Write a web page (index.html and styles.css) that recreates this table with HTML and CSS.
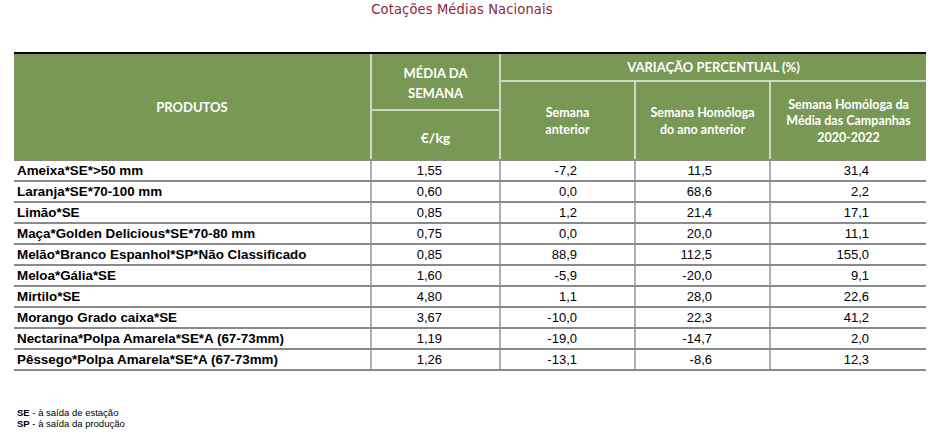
FILE: index.html
```html
<!DOCTYPE html>
<html lang="pt">
<head>
<meta charset="utf-8">
<title>Cotações Médias Nacionais</title>
<link rel="stylesheet" href="styles.css">
</head>
<body>
<h1 class="title">Cotações Médias Nacionais</h1>
<div class="quotes">
  <div class="head">
    <div class="hc h-prod">PRODUTOS</div>
    <div class="hc h-media">MÉDIA DA<br>SEMANA</div>
    <div class="hc h-unit">€/kg</div>
    <div class="hc h-var">VARIAÇÃO PERCENTUAL (%)</div>
    <div class="hc sub s1">Semana<br>anterior</div>
    <div class="hc sub s2">Semana Homóloga<br>do ano anterior</div>
    <div class="hc sub s3">Semana Homóloga da<br>Média das Campanhas<br>2020-2022</div>
  </div>
  <div class="row"><div class="c prod">Ameixa*SE*&gt;50 mm</div><div class="c num">1,55</div><div class="c num">-7,2</div><div class="c num">11,5</div><div class="c num last">31,4</div></div>
  <div class="row"><div class="c prod">Laranja*SE*70-100 mm</div><div class="c num">0,60</div><div class="c num">0,0</div><div class="c num">68,6</div><div class="c num last">2,2</div></div>
  <div class="row"><div class="c prod">Limão*SE</div><div class="c num">0,85</div><div class="c num">1,2</div><div class="c num">21,4</div><div class="c num last">17,1</div></div>
  <div class="row"><div class="c prod">Maça*Golden Delicious*SE*70-80 mm</div><div class="c num">0,75</div><div class="c num">0,0</div><div class="c num">20,0</div><div class="c num last">11,1</div></div>
  <div class="row"><div class="c prod">Melão*Branco Espanhol*SP*Não Classificado</div><div class="c num">0,85</div><div class="c num">88,9</div><div class="c num">112,5</div><div class="c num last">155,0</div></div>
  <div class="row"><div class="c prod">Meloa*Gália*SE</div><div class="c num">1,60</div><div class="c num">-5,9</div><div class="c num">-20,0</div><div class="c num last">9,1</div></div>
  <div class="row"><div class="c prod">Mirtilo*SE</div><div class="c num">4,80</div><div class="c num">1,1</div><div class="c num">28,0</div><div class="c num last">22,6</div></div>
  <div class="row"><div class="c prod">Morango Grado caixa*SE</div><div class="c num">3,67</div><div class="c num">-10,0</div><div class="c num">22,3</div><div class="c num last">41,2</div></div>
  <div class="row"><div class="c prod">Nectarina*Polpa Amarela*SE*A (67-73mm)</div><div class="c num">1,19</div><div class="c num">-19,0</div><div class="c num">-14,7</div><div class="c num last">2,0</div></div>
  <div class="row"><div class="c prod">Pêssego*Polpa Amarela*SE*A (67-73mm)</div><div class="c num">1,26</div><div class="c num">-13,1</div><div class="c num">-8,6</div><div class="c num last">12,3</div></div>
</div>
<div class="notes">
  <p><b>SE</b> - à saída de estação</p>
  <p><b>SP</b> - à saída da produção</p>
</div>
</body>
</html>
```

FILE: styles.css
```css
* { box-sizing: border-box; }

body {
  margin: 0;
  background: #ffffff;
  font-family: "Liberation Sans", Arial, sans-serif;
  color: #000;
}

.title {
  margin: 0;
  padding-right: 16px;
  height: 18px;
  line-height: 18px;
  text-align: center;
  font-family: "DejaVu Sans Condensed", "DejaVu Sans", sans-serif;
  font-stretch: condensed;
  font-weight: normal;
  font-size: 14.5px;
  letter-spacing: 0.15px;
  color: #8a2540;
}

.quotes {
  margin: 34px 14px 0 14px;
  width: 912px;
}

.head {
  display: grid;
  grid-template-columns: 358px 129px 135px 135px 155px;
  grid-template-rows: 28px 29px 48px;
  background: #799856;
  border-top: 2px solid #000;
  border-bottom: 2px solid #8a8a8a;
  color: #fff;
  font-family: Lato, "Open Sans", sans-serif;
  font-weight: bold;
  font-size: 12.5px;
}

.hc {
  display: flex;
  align-items: center;
  justify-content: center;
  text-align: center;
  border-color: #cfd6c6;
  border-style: solid;
  border-width: 0;
}

.h-prod { grid-column: 1; grid-row: 1 / 4; border-right-width: 2px; font-size: 13px; }
.h-media { grid-column: 2; grid-row: 1 / 3; border-right-width: 2px; border-bottom-width: 2px; line-height: 20px; padding-top: 2px; font-size: 13px; }
.h-unit { grid-column: 2; grid-row: 3; border-right-width: 2px; font-size: 14px; padding-top: 4px; }
.h-var { grid-column: 3 / 6; grid-row: 1; border-bottom-width: 2px; font-size: 13px; }
.sub { grid-row: 2 / 4; line-height: 16.5px; }
.s1 { grid-column: 3; border-right-width: 2px; padding-top: 2px; }
.s2 { grid-column: 4; border-right-width: 2px; padding-top: 2px; }
.s3 { grid-column: 5; padding-top: 2px; }

.row {
  display: grid;
  grid-template-columns: 358px 129px 135px 135px 155px;
  height: 21px;
  border-bottom: 2px solid #8a8a8a;
  font-size: 13px;
}

.c {
  display: flex;
  align-items: center;
  border-right: 2px solid #b0b0b0;
  white-space: nowrap;
}

.c.last { border-right: 0; }

.prod {
  font-weight: bold;
  font-size: 13.4px;
  padding-left: 3px;
}

.num {
  justify-content: flex-end;
  padding-right: 57px;
}

.notes {
  margin: 36px 0 0 17px;
  font-size: 9.5px;
  line-height: 11px;
}

.notes p { margin: 0; }
```
